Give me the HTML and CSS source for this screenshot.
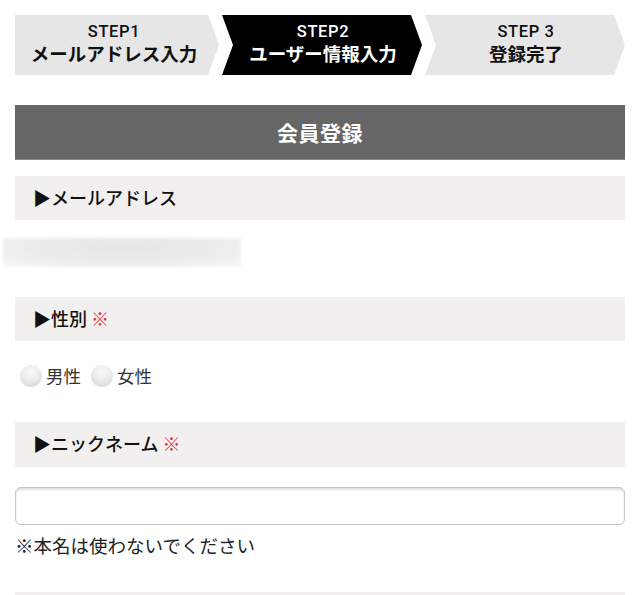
FILE: index.html
```html
<!DOCTYPE html>
<html lang="ja">
<head>
<meta charset="utf-8">
<link rel="stylesheet" href="styles.css">
</head>
<body>
<div class="page">
  <div class="steps">
    <div class="step first">
      <span class="step-no">STEP1</span>
      <span class="step-name">メールアドレス入力</span>
    </div>
    <div class="step active">
      <span class="step-no">STEP2</span>
      <span class="step-name">ユーザー情報入力</span>
    </div>
    <div class="step">
      <span class="step-no">STEP 3</span>
      <span class="step-name">登録完了</span>
    </div>
  </div>

  <h1 class="title">会員登録</h1>

  <div class="label">▶メールアドレス</div>
  <div class="email-blur"></div>

  <div class="label label-gap">▶性別 <span class="req">※</span></div>
  <div class="radios">
    <label class="radio"><span class="dot"></span>男性</label>
    <label class="radio"><span class="dot"></span>女性</label>
  </div>

  <div class="label label-gap2">▶ニックネーム <span class="req">※</span></div>
  <input class="text-input" type="text">
  <p class="note">※本名は使わないでください</p>

  <div class="label next"></div>
</div>
</body>
</html>
```

FILE: styles.css
```css
* { box-sizing: border-box; }
html, body { margin: 0; padding: 0; background: #fff; }
html { height: 595px; overflow: hidden; }
body {
  font-family: "Noto Sans CJK JP", "Noto Sans", sans-serif;
  color: #111;
}
.page { padding: 15px 15px 0; }

.steps {
  display: flex;
  gap: 3px;
  height: 60px;
}
.step {
  flex: 1;
  display: flex;
  flex-direction: column;
  align-items: center;
  justify-content: center;
  background: #e6e6e6;
  color: #111;
  clip-path: polygon(0 0, calc(100% - 11px) 0, 100% 50%, calc(100% - 11px) 100%, 0 100%, 11px 50%);
  padding: 0 0 3px 2px;
}
.step.first {
  clip-path: polygon(0 0, calc(100% - 11px) 0, 100% 50%, calc(100% - 11px) 100%, 0 100%);
  padding: 0 6px 3px 0;
}
.step.active { background: #000; color: #fff; }
.step-no {
  font-family: Roboto, "Liberation Sans", sans-serif;
  font-size: 16.5px;
  font-weight: 500;
  line-height: 19px;
  letter-spacing: 0.6px;
}
.step-name { font-size: 18.5px; font-weight: 700; line-height: 24px; }

.title {
  margin: 30px 0 0;
  height: 55px;
  background: #666;
  border-bottom: 1px solid #8a8a8a;
  color: #fff;
  font-size: 21px;
  font-weight: 700;
  text-align: center;
  line-height: 54px;
  letter-spacing: 0.5px;
}

.label {
  margin-top: 16px;
  height: 44px;
  background: #f1f0ef;
  padding-left: 18px;
  font-size: 18px;
  font-weight: 500;
  line-height: 42px;
  color: #111;
}
.label-gap { margin-top: 30px; }
.label-gap2 { margin-top: 34px; height: 45px; }
.req { color: #e0304c; font-weight: 400; }

.email-blur {
  margin: 18px 0 0 -12px;
  width: 238px;
  height: 29px;
  background: radial-gradient(ellipse at 50% 30%, #e6e6e6 0%, #ececec 55%, #f6f6f6 100%);
  filter: blur(1.5px);
}

.radios {
  display: flex;
  gap: 10px;
  margin-top: 23px;
  padding-left: 5px;
  height: 24px;
  align-items: center;
}
.radio {
  display: flex;
  align-items: center;
  font-size: 17.5px;
  font-weight: 400;
  color: #333;
  gap: 4px;
  line-height: 22px;
}
.dot {
  width: 22px;
  height: 22px;
  border-radius: 50%;
  background: radial-gradient(circle at 50% 30%, #fafafa 0%, #ececec 45%, #d2d2d2 100%);
}

.text-input {
  display: block;
  margin-top: 20px;
  width: 100%;
  height: 38px;
  border: 1px solid #c4c4c4;
  border-radius: 6px;
  box-shadow: inset 0 2px 2px rgba(0,0,0,0.12);
  background: #fff;
  font-size: 16px;
  padding: 0 8px;
}
.note {
  margin: 7px 0 0;
  font-size: 18.5px;
  line-height: 26px;
  color: #222;
}
.label.next { margin-top: 34px; }
```
